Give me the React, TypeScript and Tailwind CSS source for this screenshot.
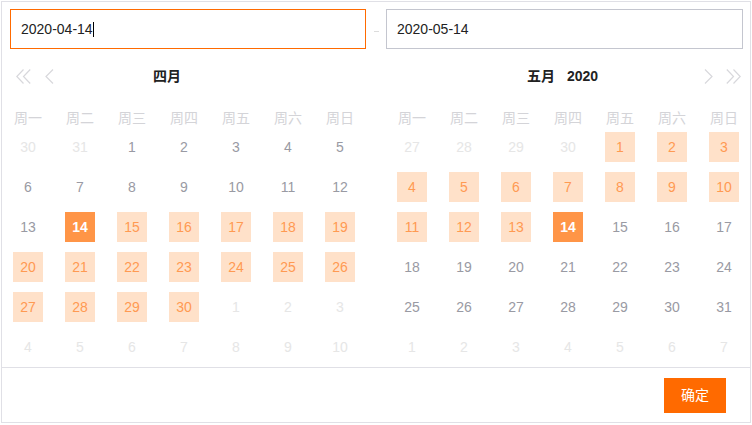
import React from 'react';

type Cell = { d: number; kind: 'out' | 'normal' | 'range' | 'sel' };

const WEEK = ['周一', '周二', '周三', '周四', '周五', '周六', '周日'];

const build = (lead: number[], days: number, tail: number, rangeFrom: number, rangeTo: number, sel: number): Cell[] => {
  const cells: Cell[] = lead.map((d) => ({ d, kind: 'out' }));
  for (let d = 1; d <= days; d++) {
    let kind: Cell['kind'] = 'normal';
    if (d === sel) kind = 'sel';
    else if (d >= rangeFrom && d <= rangeTo) kind = 'range';
    cells.push({ d, kind });
  }
  for (let d = 1; d <= tail; d++) cells.push({ d, kind: 'out' });
  return cells;
};

const april = build([30, 31], 30, 10, 15, 30, 14);
const may = build([27, 28, 29, 30], 31, 7, 1, 13, 14);

const DayCell: React.FC<{ cell: Cell }> = ({ cell }) => {
  const base = 'w-[30px] h-[30px] flex items-center justify-center text-[14px]';
  if (cell.kind === 'sel')
    return <div className={`${base} bg-[#ff9547] text-white font-bold`}>{cell.d}</div>;
  if (cell.kind === 'range')
    return <div className={`${base} bg-[#ffe1c9] text-[#ff9a52]`}>{cell.d}</div>;
  if (cell.kind === 'out')
    return <div className={`${base} text-[#e6e6e6]`}>{cell.d}</div>;
  return <div className={`${base} text-[#999aa3]`}>{cell.d}</div>;
};

const Grid: React.FC<{ cells: Cell[] }> = ({ cells }) => (
  <div>
    <div className="mt-[23px] grid grid-cols-[repeat(7,52px)] h-[18px] leading-[18px]">
      {WEEK.map((w) => (
        <div key={w} className="text-center text-[14px] text-[#d4d4d8]">
          {w}
        </div>
      ))}
    </div>
    <div className="grid grid-cols-[repeat(7,52px)] grid-rows-[repeat(6,40px)]">
      {cells.map((c, i) => (
        <div key={i} className="flex items-center justify-center">
          <DayCell cell={c} />
        </div>
      ))}
    </div>
  </div>
);

const DoubleLeft = () => (
  <svg width="15" height="15" viewBox="0 0 15 15" fill="none" stroke="#d8d8dc" strokeWidth="1.2">
    <path d="M7.5 0.5 L0.8 7.5 L7.5 14.5" />
    <path d="M14.2 0.5 L7.5 7.5 L14.2 14.5" />
  </svg>
);
const SingleLeft = () => (
  <svg width="9" height="15" viewBox="0 0 9 15" fill="none" stroke="#d8d8dc" strokeWidth="1.2">
    <path d="M8 0.5 L1 7.5 L8 14.5" />
  </svg>
);
const SingleRight = () => (
  <svg width="9" height="15" viewBox="0 0 9 15" fill="none" stroke="#d8d8dc" strokeWidth="1.2">
    <path d="M1 0.5 L8 7.5 L1 14.5" />
  </svg>
);
const DoubleRight = () => (
  <svg width="15" height="15" viewBox="0 0 15 15" fill="none" stroke="#d8d8dc" strokeWidth="1.2">
    <path d="M0.8 0.5 L7.5 7.5 L0.8 14.5" />
    <path d="M7.5 0.5 L14.2 7.5 L7.5 14.5" />
  </svg>
);

export default function App() {
  return (
    <div
      className="ml-px mt-px w-[750px] h-[422px] border border-[#e0e0e6] bg-white flex flex-col text-[#333]"
      style={{ fontFamily: '"Liberation Sans", "Noto Sans CJK SC", sans-serif' }}
    >
      <div className="flex pt-[7px]">
        {/* Left panel */}
        <div className="w-[364px]">
          <div className="ml-[8px] w-[356px] h-[40px] border border-[#ff6a00] flex items-center pl-[10px] text-[14px] text-[#222]">
            <span>2020-04-14</span>
            <span className="w-px h-[15px] bg-black" />
          </div>
          <div className="mt-[17px] h-[20px] flex items-center">
            <div className="ml-[14px]">
              <DoubleLeft />
            </div>
            <div className="ml-[14px]">
              <SingleLeft />
            </div>
            <div className="ml-[99px] text-[14px] font-bold text-[#222]">四月</div>
          </div>
          <Grid cells={april} />
        </div>

        {/* Separator */}
        <div className="w-[20px] h-[40px] mt-[2px] flex items-center justify-center">
          <div className="w-[5px] h-px bg-[#dcdcdc]" />
        </div>

        {/* Right panel */}
        <div className="w-[364px]">
          <div className="w-[357px] h-[40px] border border-[#c4c6cf] flex items-center pl-[10px] text-[14px] text-[#222]">
            2020-05-14
          </div>
          <div className="mt-[17px] h-[20px] flex items-center">
            <div className="ml-[141px] text-[14px] font-bold text-[#222]">
              五月<span className="ml-[12px]">2020</span>
            </div>
            <div className="flex-1" />
            <SingleRight />
            <div className="ml-[13px] mr-[9px]">
              <DoubleRight />
            </div>
          </div>
          <Grid cells={may} />
        </div>
      </div>

      {/* Footer */}
      <div className="border-t border-[#e0e0e6] flex justify-end pt-[10px] pr-[24px] pb-[9px]">
        <button className="w-[62px] h-[35px] bg-[#ff6a00] text-white text-[14px]">确定</button>
      </div>
    </div>
  );
}
